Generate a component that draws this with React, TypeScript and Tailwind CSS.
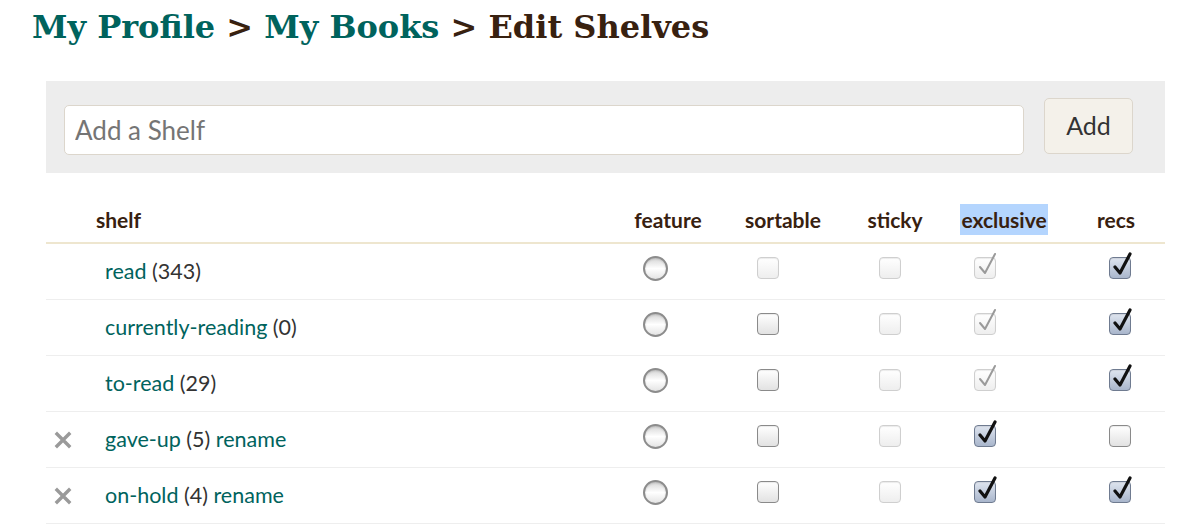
import React from "react";

type Box = "off" | "offDim" | "on" | "onDim";

interface Shelf {
  name: string;
  count: number;
  custom: boolean;
  sortable: Box;
  exclusive: Box;
  recs: Box;
}

const shelves: Shelf[] = [
  { name: "read", count: 343, custom: false, sortable: "offDim", exclusive: "onDim", recs: "on" },
  { name: "currently-reading", count: 0, custom: false, sortable: "off", exclusive: "onDim", recs: "on" },
  { name: "to-read", count: 29, custom: false, sortable: "off", exclusive: "onDim", recs: "on" },
  { name: "gave-up", count: 5, custom: true, sortable: "off", exclusive: "on", recs: "off" },
  { name: "on-hold", count: 4, custom: true, sortable: "off", exclusive: "on", recs: "on" },
];

const cols = "grid grid-cols-[44px_529px_98px_132px_92px_126px_98px]";
const lato = "font-['Lato','Liberation_Sans',sans-serif]";

function Checkbox({ state }: { state: Box }) {
  const dim = state === "offDim" || state === "onDim";
  const checked = state === "on" || state === "onDim";
  const boxCls = dim
    ? "border-[#cfcfcf] bg-gradient-to-b from-white to-[#eeeeee]"
    : checked
      ? "border-[#6f7b90] bg-gradient-to-b from-[#dfe5ef] to-[#a9b6cc]"
      : "border-[#8a8a8a] bg-gradient-to-b from-white to-[#e2e2e2]";
  return (
    <div className={`relative w-[22px] h-[22px] rounded-[4px] border-[1.5px] shadow-[inset_0_1px_1px_rgba(0,0,0,0.08)] ${boxCls}`}>
      {checked && (
        <svg className="absolute left-[2px] top-[-6px]" width="22" height="26" viewBox="0 0 22 26" fill="none">
          <path
            d="M3 15 L8 21 L18 2"
            stroke={dim ? "#9a9a9a" : "#111"}
            strokeWidth={dim ? 2 : 3.2}
            strokeLinecap="round"
            strokeLinejoin="round"
          />
        </svg>
      )}
    </div>
  );
}

function Radio() {
  return (
    <div className="w-[25px] h-[25px] rounded-full border-[2.5px] border-[#8c8c8c] bg-gradient-to-b from-[#d6d6d6] via-white to-[#e4e4e4] shadow-[inset_0_1px_2px_rgba(0,0,0,0.15)]" />
  );
}

function XIcon() {
  return (
    <svg width="18" height="18" viewBox="0 0 18 18" fill="none">
      <path d="M3 3 L15 15 M15 3 L3 15" stroke="#9a9a9a" strokeWidth="3.4" strokeLinecap="square" />
    </svg>
  );
}

export default function App() {
  return (
    <div className="bg-white min-h-[531px] px-[32px] pt-[7px]">
      {/* Breadcrumb */}
      <h1 className="font-['DejaVu_Serif',serif] font-bold text-[32px] leading-[40px] text-[#382110] whitespace-nowrap">
        <span className="text-[#00635d]">My Profile</span> &gt; <span className="text-[#00635d]">My Books</span> &gt; Edit Shelves
      </h1>

      <div className={`ml-[14px] w-[1119px] ${lato}`}>
        {/* Add shelf panel */}
        <div className="mt-[34px] h-[92px] bg-[#ededed] flex items-start pl-[18px] pr-[32px] gap-[20px]">
          <input
            className="mt-[24px] flex-1 h-[50px] bg-white border border-[#dcd6cc] rounded-[5px] px-[10px] text-[26px] outline-none placeholder:text-[#757575] text-[#333]"
            placeholder="Add a Shelf"
          />
          <button className="mt-[17px] w-[89px] h-[56px] bg-[#f4f1ea] border border-[#dcd6cc] rounded-[5px] text-[25px] text-[#333]">
            Add
          </button>
        </div>

        {/* Table header */}
        <div className={`${cols} mt-[25px] h-[46px] items-center border-b-[2.5px] border-[#eee6cf] text-[21px] font-bold text-[#382110]`}>
          <div />
          <div className="pl-[6px]">shelf</div>
          <div className="text-center">feature</div>
          <div className="text-center">sortable</div>
          <div className="text-center">sticky</div>
          <div className="text-center">
            <span className="bg-[#b4d5fe] px-[1px] py-[3px]">exclusive</span>
          </div>
          <div className="text-center">recs</div>
        </div>

        {/* Rows */}
        {shelves.map((s) => (
          <div key={s.name} className={`${cols} h-[56px] items-center border-b border-[#eeeeee] text-[21.5px]`}>
            <div className="pl-[8px] flex items-center">{s.custom && <XIcon />}</div>
            <div className="pl-[15px] text-[#333] whitespace-nowrap">
              <span className="text-[#00635d]">{s.name}</span> ({s.count})
              {s.custom && <span className="text-[#00635d]"> rename</span>}
            </div>
            <div className="pl-[24px] mb-[7px]"><Radio /></div>
            <div className="pl-[40px] mb-[7px]"><Checkbox state={s.sortable} /></div>
            <div className="pl-[30px] mb-[7px]"><Checkbox state="offDim" /></div>
            <div className="pl-[33px] mb-[7px]"><Checkbox state={s.exclusive} /></div>
            <div className="pl-[42px] mb-[7px]"><Checkbox state={s.recs} /></div>
          </div>
        ))}
      </div>
    </div>
  );
}
